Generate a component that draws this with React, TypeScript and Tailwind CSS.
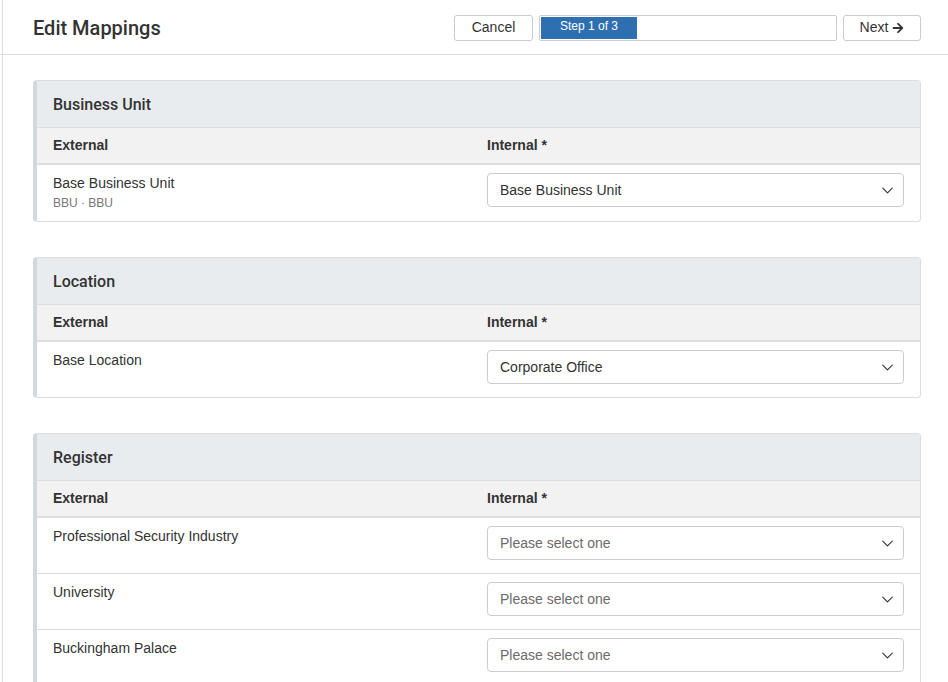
import React from 'react';
import { ChevronDown } from 'lucide-react';
import { FaArrowRight } from 'react-icons/fa';

type Row = { external: string; sub?: string; value?: string };
type Section = { title: string; rows: Row[] };

const sections: Section[] = [
  { title: 'Business Unit', rows: [{ external: 'Base Business Unit', sub: 'BBU · BBU', value: 'Base Business Unit' }] },
  { title: 'Location', rows: [{ external: 'Base Location', value: 'Corporate Office' }] },
  {
    title: 'Register',
    rows: [
      { external: 'Professional Security Industry' },
      { external: 'University' },
      { external: 'Buckingham Palace' },
    ],
  },
];

const SelectBox: React.FC<{ value?: string }> = ({ value }) => (
  <div className="flex h-[34px] items-center justify-between rounded-[4px] border border-[#cccccc] bg-white pl-3 pr-[6px]">
    <span className={value ? 'text-[14px] text-[#333]' : 'text-[14px] text-[#6b6b6b]'}>
      {value ?? 'Please select one'}
    </span>
    <ChevronDown size={19} strokeWidth={1.4} className="text-[#333]" />
  </div>
);

const MappingCard: React.FC<{ section: Section }> = ({ section }) => (
  <div className="overflow-hidden rounded-[4px] border border-l-4 border-[#dddddd] border-l-[#d3d8df]">
    {/* Card header */}
    <div className="flex h-[47px] items-center border-b border-[#dddddd] bg-[#e8ecef] px-4 pt-[2px]">
      <h2 className="text-[16px] font-medium text-[#333]" style={{ fontFamily: 'Roboto, "Liberation Sans", sans-serif' }}>
        {section.title}
      </h2>
    </div>

    {/* Column headings */}
    <div className="grid h-[37px] grid-cols-[434px_1fr] items-center border-b-2 border-[#dddddd] bg-[#f2f2f2] px-4 text-[14px] font-bold text-[#333]">
      <span>External</span>
      <span>Internal *</span>
    </div>

    {section.rows.map((row, i) => (
      <div
        key={row.external}
        className={`grid grid-cols-[434px_1fr] items-start px-4 pb-[10px] pt-[8px] ${
          i > 0 ? 'min-h-[56px] border-t border-[#dddddd]' : 'min-h-[55px]'
        }`}
      >
        <div>
          <div className="text-[14px] leading-[20px] text-[#333]">{row.external}</div>
          {row.sub && <div className="mt-[2px] text-[12px] leading-[16px] text-[#777]">{row.sub}</div>}
        </div>
        <SelectBox value={row.value} />
      </div>
    ))}
  </div>
);

const App: React.FC = () => {
  return (
    <div
      className="min-h-screen bg-white"
      style={{ fontFamily: '"Liberation Sans", Arial, sans-serif' }}
    >
      <div className="ml-[2px] min-h-screen border-l border-[#dddddd]">
        {/* Header */}
        <div className="-ml-[3px] flex h-[55px] items-center justify-between border-b border-[#dddddd] pl-[33px] pr-[27px]">
          <h1 className="pt-[2px] text-[20px] font-medium text-[#333]" style={{ fontFamily: 'Roboto, "Liberation Sans", sans-serif' }}>
            Edit Mappings
          </h1>
          <div className="flex items-center gap-[6px] pt-[1px]">
            <button className="h-[26px] w-[79px] rounded-[3px] border border-[#cccccc] bg-white text-[14px] text-[#333]">
              Cancel
            </button>
            <div className="h-[26px] w-[298px] rounded-[2px] border border-[#cccccc] bg-white p-[1px]">
              <div className="flex h-full w-[96px] items-start justify-center bg-[#2d6fb0] text-[12px] leading-[18px] text-white">
                Step 1 of 3
              </div>
            </div>
            <button className="flex h-[26px] w-[78px] items-center justify-center gap-[4px] rounded-[3px] border border-[#cccccc] bg-white text-[14px] text-[#333]">
              Next <FaArrowRight size={12} />
            </button>
          </div>
        </div>

        {/* Sections */}
        <div className="flex flex-col gap-[35px] pl-[30px] pr-[27px] pt-[25px]">
          {sections.map((s) => (
            <MappingCard key={s.title} section={s} />
          ))}
        </div>
      </div>
    </div>
  );
};

export default App;
